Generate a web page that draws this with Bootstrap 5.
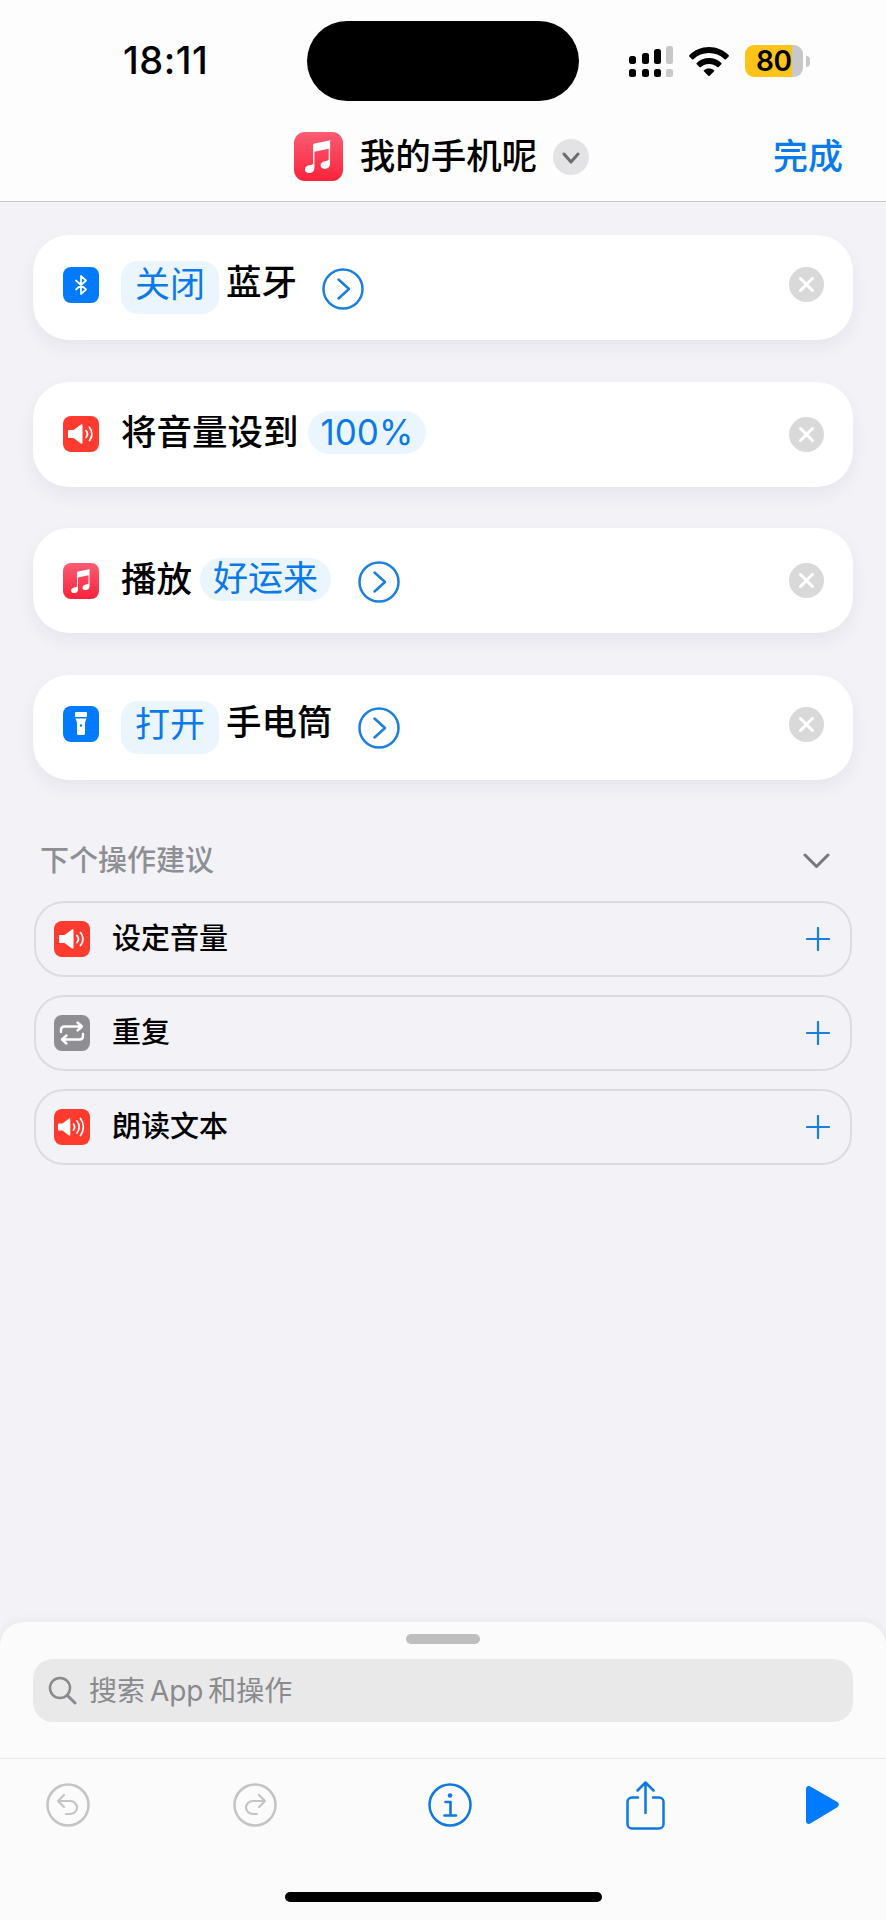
<!DOCTYPE html>
<html lang="zh-CN">

<head>
    <meta charset="UTF-8">
    <title>我的手机呢</title>
    <link href="https://cdn.jsdelivr.net/npm/bootstrap@5.3.0/dist/css/bootstrap.min.css" rel="stylesheet">
    <style>
        body {
            background-color: #f2f2f7;
            font-family: Inter, "Noto Sans CJK SC", sans-serif;
            color: #000;
            width: 886px;
            height: 1920px;
            overflow: hidden;
        }

        .page-wrap {
            height: 1920px;
        }

        .top-area {
            background-color: #fdfdfd;
            border-bottom: 1px solid #c8c8ca;
            height: 202px;
        }

        .status-row {
            height: 122px;
            padding-top: 21px;
            padding-left: 123px;
        }

        .clock {
            width: 184px;
            font-size: 38px;
            font-weight: 500;
            line-height: 78px;
            letter-spacing: 0.5px;
        }

        .island {
            width: 272px;
            height: 80px;
            border-radius: 40px;
            background-color: #000;
        }

        .status-icons {
            margin-left: 50px;
            height: 80px;
        }

        .batt {
            width: 58px;
            height: 32px;
            margin-left: 16px;
            border-radius: 9px;
            background: linear-gradient(to right, #fcc419 47px, #c8c8ca 47px);
            font-size: 28px;
            font-weight: 600;
            line-height: 32px;
            padding-left: 11px;
            letter-spacing: -0.5px;
        }

        .batt-nub {
            width: 4px;
            height: 11px;
            margin-left: 3px;
            border-radius: 0 4px 4px 0;
            background-color: #c8c8ca;
        }

        .nav-row {
            padding: 10px 43px 0 40px;
        }

        .nav-side {
            flex: 1 1 0;
        }

        .title-text {
            font-size: 35.5px;
            font-weight: 500;
            line-height: 49px;
            margin: 0 16px 0 17px;
            white-space: nowrap;
        }

        .done-link {
            font-size: 35px;
            font-weight: 500;
            line-height: 49px;
            color: #0a7aea;
        }

        .action-list {
            margin: 33px 33px 0;
            gap: 41.6px;
        }

        .action-box {
            height: 105px;
            border-radius: 36px;
            background-color: #fff;
            box-shadow: 0 8px 18px rgba(40, 40, 60, 0.06);
            padding: 0 29px 0 30px;
            font-size: 35.5px;
            font-weight: 500;
            line-height: 50px;
            white-space: nowrap;
        }

        .lifted {
            margin-bottom: 6px;
        }

        .icon-tile {
            flex: none;
            margin-right: 23px;
            display: block;
        }

        .word {
            margin-bottom: 9px;
        }

        .word-short {
            margin-bottom: 2px;
            margin-left: -1px;
        }

        .token {
            background-color: #ebf5fe;
            color: #0a7aea;
            font-size: 35px;
            font-weight: 400;
            border-radius: 17px;
            padding: 0 14px;
            height: 53px;
            line-height: 46px;
            margin: 0 7px 0 -1px;
        }

        .token-thin {
            height: 43px;
            line-height: 42px;
            border-radius: 22px;
            margin: 0 0 3px 9px;
            padding: 0 13px;
        }

        .token-mid {
            height: 43px;
            line-height: 41px;
            border-radius: 22px;
            margin: 0 0 2px 8px;
            padding: 0 13px;
        }

        .go-circle {
            flex: none;
            display: block;
            margin-top: 2px;
        }

        .go-one {
            margin-left: 25px;
        }

        .go-two {
            margin-left: 27px;
        }

        .remove-dot {
            flex: none;
            display: block;
            margin-left: auto;
        }

        .hint-head {
            margin: 66px 56px 25px 40px;
            font-size: 29px;
            font-weight: 500;
            line-height: 30px;
            color: #8e8e93;
        }

        .hint-list {
            margin: 0 34px;
            gap: 18px;
        }

        .hint-item {
            height: 76px;
            border: 2px solid #dcdce0;
            border-radius: 30px;
            padding: 0 20px 0 18px;
            font-size: 29px;
            font-weight: 500;
            line-height: 40px;
        }

        .hint-item .icon-tile {
            margin-right: 22px;
        }

        .bottom-sheet {
            margin-top: auto;
            height: 298px;
            background-color: #fbfbfb;
            border-radius: 24px 24px 0 0;
            box-shadow: 0 -2px 10px rgba(40, 40, 60, 0.05);
        }

        .grabber {
            width: 74px;
            height: 10px;
            border-radius: 5px;
            background-color: #bebebe;
            margin: 12px auto 15px;
        }

        .search-box {
            margin: 0 33px;
            height: 63px;
            border-radius: 20px;
            background-color: #e9e9e9;
            padding-left: 15px;
            color: #8a8a8e;
            font-size: 28px;
            line-height: 40px;
            word-spacing: -3px;
        }

        .search-box svg {
            margin-right: 12px;
        }

        .tool-row {
            margin-top: 36px;
            height: 93px;
            border-top: 1px solid #e8e8e8;
            padding-left: 46px;
        }

        .tool-row svg:nth-child(2) {
            margin-left: 143px;
        }

        .tool-row svg:nth-child(3) {
            margin-left: 151px;
        }

        .tool-row svg:nth-child(4) {
            margin-left: 154px;
        }

        .tool-row svg:nth-child(5) {
            margin-left: 141px;
        }

        .home-bar {
            width: 317px;
            height: 10px;
            border-radius: 5px;
            background-color: #000;
            margin: 41px auto 0;
        }
    </style>
</head>

<body>
    <svg width="0" height="0" class="position-absolute">
        <defs>
            <linearGradient id="musicFill" x1="0" y1="0" x2="0" y2="1">
                <stop offset="0" stop-color="#fb5c74" />
                <stop offset="1" stop-color="#fa233b" />
            </linearGradient>
            <symbol id="musicTile" viewBox="0 0 36 36">
                <rect width="36" height="36" rx="8" fill="url(#musicFill)" />
                <path fill="#fff"
                    d="M26.5 6.6v16.6c0 2.5-1.7 3.9-4 3.900-1.800 0-3-1-3-2.600 0-1.700 1.200-2.700 3.200-3.100l1.900-.4c.6-.1.900-.5.900-1.100V12.300l-10.500 2.200v11.700c0 2.500-1.700 3.900-4 3.900-1.800 0-3-1-3-2.600 0-1.700 1.200-2.700 3.200-3.100l1.900-.4c.6-.1.900-.5.900-1.100V9.800c0-.7.400-1.200 1.100-1.300l10.900-2.300c.8-.1 1.500.3 1.500.4z" />
            </symbol>
            <symbol id="speakerTile" viewBox="0 0 36 36">
                <rect width="36" height="36" rx="8" fill="#ff3b30" />
                <path fill="#fff" d="M6 14h4.500L18 8.500c.7-.5 1.500 0 1.500.8v17.400c0 .8-.8 1.300-1.500.8L10.500 22H6c-.6 0-1-.4-1-1v-6c0-.6.4-1 1-1z" />
                <path fill="none" stroke="#fff" stroke-width="1.800" stroke-linecap="round" d="M23 14.500a5.500 5.500 0 0 1 0 7M26.500 11.500a10 10 0 0 1 0 13" />
            </symbol>
            <symbol id="speakerTileWide" viewBox="0 0 36 36">
                <rect width="36" height="36" rx="8" fill="#ff3b30" />
                <path fill="#fff" d="M5 14.500h3.500L15 9.500c.6-.5 1.300 0 1.300.7v15.600c0 .7-.7 1.200-1.300.7L8.500 21.500H5c-.6 0-1-.4-1-1v-5c0-.6.4-1 1-1z" />
                <path fill="none" stroke="#fff" stroke-width="1.700" stroke-linecap="round" d="M19.500 15a5 5 0 0 1 0 6M23 12a9.500 9.500 0 0 1 0 12M26.500 9.500a14 14 0 0 1 0 17" />
            </symbol>
            <symbol id="goCircle" viewBox="0 0 42 42">
                <circle cx="21" cy="21" r="19.500" fill="none" stroke="#1a7fe0" stroke-width="2.500" />
                <path d="M16.500 11.500 27 21 16.500 30.500" fill="none" stroke="#1a7fe0" stroke-width="2.500" stroke-linecap="round" stroke-linejoin="round" />
            </symbol>
            <symbol id="removeDot" viewBox="0 0 35 35">
                <circle cx="17.500" cy="17.500" r="17.500" fill="#d9d9d9" />
                <path d="M11.500 11.500l12 12M23.500 11.500l-12 12" stroke="#fff" stroke-width="3" stroke-linecap="round" />
            </symbol>
            <symbol id="plusMark" viewBox="0 0 24 24">
                <path d="M12 1v22M1 12h22" stroke="#1a7fe0" stroke-width="2.200" stroke-linecap="round" />
            </symbol>
        </defs>
    </svg>

    <div class="page-wrap d-flex flex-column">
        <div class="top-area">
            <div class="status-row d-flex align-items-start">
                <div class="clock">18:11</div>
                <div class="island"></div>
                <div class="status-icons d-flex align-items-center">
                    <svg width="44" height="31" viewBox="0 0 44 31" class="d-block">
                        <g fill="#000">
                            <rect x="0" y="10" width="7" height="8" rx="2.500" />
                            <rect x="13" y="7" width="7" height="11" rx="2.500" />
                            <rect x="25" y="3" width="7" height="15" rx="2.500" />
                            <rect x="0" y="23" width="7" height="8" rx="2.500" />
                            <rect x="13" y="23" width="7" height="8" rx="2.500" />
                            <rect x="25" y="23" width="7" height="8" rx="2.500" />
                        </g>
                        <rect x="37" y="0" width="7" height="18" rx="2.500" fill="#c8c8ca" />
                        <rect x="37" y="23" width="7" height="8" rx="2" fill="#c8c8ca" />
                    </svg>
                    <svg width="40" height="29" viewBox="0 0 40 29" class="d-block ms-3">
                        <path fill="#000" d="M20 0c7.500 0 14.500 3 19.700 8.200.4.400.4.900 0 1.300l-2.700 2.800c-.4.400-1 .4-1.400 0C31.400 8.200 25.900 6 20 6S8.600 8.200 4.400 12.300c-.4.400-1 .4-1.400 0L.3 9.500c-.4-.4-.4-.9 0-1.300C5.500 3 12.500 0 20 0z" />
                        <path fill="#000" d="M20 11c4.700 0 9 1.800 12.300 5 .4.400.4.900 0 1.300l-2.700 2.700c-.4.400-1 .4-1.400 0-2.200-2-5.100-3.100-8.200-3.100s-6 1.100-8.200 3.100c-.4.400-1 .4-1.400 0l-2.700-2.700c-.4-.4-.4-.9 0-1.300C11 12.800 15.300 11 20 11z" />
                        <path fill="#000" d="M20 21.500c2 0 3.700.6 5 1.700.4.300.4.800.1 1.100l-4.400 4.400c-.4.400-1 .4-1.400 0l-4.400-4.400c-.3-.3-.3-.8.100-1.100 1.300-1.100 3-1.700 5-1.700z" />
                    </svg>
                    <div class="batt">80</div>
                    <div class="batt-nub"></div>
                </div>
            </div>
            <div class="nav-row d-flex align-items-center">
                <div class="nav-side"></div>
                <div class="d-flex align-items-center">
                    <svg width="49" height="49" class="d-block"><use href="#musicTile" /></svg>
                    <div class="title-text">我的手机呢</div>
                    <svg width="36" height="36" viewBox="0 0 36 36" class="d-block">
                        <circle cx="18" cy="18" r="18" fill="#e3e3e5" />
                        <path d="M11 15l7 8 7-8" fill="none" stroke="#6c6c70" stroke-width="3" stroke-linecap="round" stroke-linejoin="round" />
                    </svg>
                </div>
                <div class="nav-side text-end"><span class="done-link">完成</span></div>
            </div>
        </div>

        <div class="action-list d-flex flex-column">
            <div class="action-box d-flex align-items-center">
                <svg width="36" height="36" viewBox="0 0 36 36" class="icon-tile lifted">
                    <rect width="36" height="36" rx="8" fill="#007aff" />
                    <path d="M13 13.500l10 9-5 4.500V9l5 4.500-10 9" fill="none" stroke="#fff" stroke-width="1.800" stroke-linejoin="round" stroke-linecap="round" />
                </svg>
                <span class="token">关闭</span>
                <span class="word">蓝牙</span>
                <svg width="42" height="42" class="go-circle go-one"><use href="#goCircle" /></svg>
                <svg width="35" height="35" class="remove-dot lifted"><use href="#removeDot" /></svg>
            </div>
            <div class="action-box d-flex align-items-center">
                <svg width="36" height="36" class="icon-tile"><use href="#speakerTile" /></svg>
                <span class="word-short">将音量设到</span>
                <span class="token token-thin">100%</span>
                <svg width="35" height="35" class="remove-dot"><use href="#removeDot" /></svg>
            </div>
            <div class="action-box d-flex align-items-center">
                <svg width="36" height="36" class="icon-tile"><use href="#musicTile" /></svg>
                <span class="word-short">播放</span>
                <span class="token token-mid">好运来</span>
                <svg width="42" height="42" class="go-circle go-two"><use href="#goCircle" /></svg>
                <svg width="35" height="35" class="remove-dot"><use href="#removeDot" /></svg>
            </div>
            <div class="action-box d-flex align-items-center">
                <svg width="36" height="36" viewBox="0 0 36 36" class="icon-tile lifted">
                    <rect width="36" height="36" rx="8" fill="#007aff" />
                    <path fill="#fff" d="M13 6h10c.6 0 1 .4 1 1v3c0 .6-.4 1-1 1H13c-.6 0-1-.4-1-1V7c0-.6.4-1 1-1zM12.500 12.500h11l-1.500 4v11c0 .8-.7 1.500-1.500 1.500h-5c-.8 0-1.500-.7-1.500-1.500v-11z" />
                    <circle cx="18" cy="19.500" r="1.200" fill="#007aff" />
                </svg>
                <span class="token">打开</span>
                <span class="word">手电筒</span>
                <svg width="42" height="42" class="go-circle go-one"><use href="#goCircle" /></svg>
                <svg width="35" height="35" class="remove-dot lifted"><use href="#removeDot" /></svg>
            </div>
        </div>

        <div class="hint-head d-flex align-items-center justify-content-between">
            <span>下个操作建议</span>
            <svg width="27" height="16" viewBox="0 0 27 16" class="d-block">
                <path d="M2 2l11.500 11.500L25 2" fill="none" stroke="#77777c" stroke-width="3" stroke-linecap="round" stroke-linejoin="round" />
            </svg>
        </div>

        <div class="hint-list d-flex flex-column">
            <div class="hint-item d-flex align-items-center">
                <svg width="36" height="36" class="icon-tile"><use href="#speakerTile" /></svg>
                <span>设定音量</span>
                <svg width="24" height="24" class="d-block ms-auto"><use href="#plusMark" /></svg>
            </div>
            <div class="hint-item d-flex align-items-center">
                <svg width="36" height="36" viewBox="0 0 36 36" class="icon-tile">
                    <rect width="36" height="36" rx="8" fill="#8e8e93" />
                    <path d="M7 17v-2c0-2 1.500-3.500 3.500-3.500H27M23.500 7.500l4.500 4-4.500 4M29 19v2c0 2-1.500 3.500-3.500 3.500H9M12.500 20.500L8 24.500l4.500 4" fill="none" stroke="#fff" stroke-width="2.400" stroke-linecap="round" stroke-linejoin="round" />
                </svg>
                <span>重复</span>
                <svg width="24" height="24" class="d-block ms-auto"><use href="#plusMark" /></svg>
            </div>
            <div class="hint-item d-flex align-items-center">
                <svg width="36" height="36" class="icon-tile"><use href="#speakerTileWide" /></svg>
                <span>朗读文本</span>
                <svg width="24" height="24" class="d-block ms-auto"><use href="#plusMark" /></svg>
            </div>
        </div>

        <div class="bottom-sheet">
            <div class="grabber"></div>
            <div class="search-box d-flex align-items-center">
                <svg width="29" height="29" viewBox="0 0 29 29" class="d-block">
                    <circle cx="12" cy="12" r="10" fill="none" stroke="#8a8a8e" stroke-width="2.500" />
                    <path d="M19.500 19.500L27 27" stroke="#8a8a8e" stroke-width="3" stroke-linecap="round" />
                </svg>
                <span>搜索 App 和操作</span>
            </div>
            <div class="tool-row d-flex align-items-center">
                <svg width="44" height="44" viewBox="0 0 44 44" class="d-block">
                    <circle cx="22" cy="22" r="20.500" fill="none" stroke="#c4c4c4" stroke-width="2.500" />
                    <path d="M18 12l-6 6 6 6M12 18h12c4 0 7 3 7 6.500S28 31 24 31h-4" fill="none" stroke="#c4c4c4" stroke-width="2.200" stroke-linecap="round" stroke-linejoin="round" />
                </svg>
                <svg width="44" height="44" viewBox="0 0 44 44" class="d-block">
                    <circle cx="22" cy="22" r="20.500" fill="none" stroke="#c4c4c4" stroke-width="2.500" />
                    <path d="M26 12l6 6-6 6M32 18H20c-4 0-7 3-7 6.500S16 31 20 31h4" fill="none" stroke="#c4c4c4" stroke-width="2.200" stroke-linecap="round" stroke-linejoin="round" />
                </svg>
                <svg width="44" height="44" viewBox="0 0 44 44" class="d-block">
                    <circle cx="22" cy="22" r="20.500" fill="none" stroke="#0f78e2" stroke-width="2.500" />
                    <circle cx="22" cy="12.500" r="2.300" fill="#0f78e2" />
                    <path d="M17.500 19H22.500V32M16.500 32.500H28" fill="none" stroke="#0f78e2" stroke-width="2.600" stroke-linecap="round" stroke-linejoin="round" />
                </svg>
                <svg width="39" height="49" viewBox="0 0 39 49" class="d-block">
                    <path d="M12 16.500H6c-2.500 0-4.500 2-4.500 4.500v22c0 2.500 2 4.500 4.500 4.500h27c2.500 0 4.500-2 4.500-4.500V21c0-2.500-2-4.500-4.500-4.500h-6" fill="none" stroke="#0f78e2" stroke-width="2.500" stroke-linecap="round" />
                    <path d="M19.500 32V2M11.500 9.500l8-8 8 8" fill="none" stroke="#0f78e2" stroke-width="2.500" stroke-linecap="round" stroke-linejoin="round" />
                </svg>
                <svg width="33" height="38" viewBox="0 0 33 38" class="d-block">
                    <path d="M0 3C0 .6 2.300-.7 4.300.5l27 15.500c2 1.200 2 4 0 5.200L4.300 37.500C2.300 38.700 0 37.400 0 35z" fill="#007aff" />
                </svg>
            </div>
            <div class="home-bar"></div>
        </div>
    </div>

    <script src="https://cdn.jsdelivr.net/npm/bootstrap@5.3.0/dist/js/bootstrap.bundle.min.js"></script>
</body>

</html>
